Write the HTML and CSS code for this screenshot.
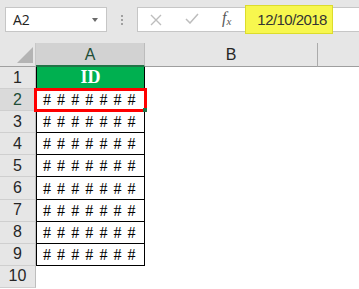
FILE: index.html
```html
<!DOCTYPE html>
<html>
<head>
<meta charset="utf-8">
<link rel="stylesheet" href="styles.css">
</head>
<body>
<div class="app">
  <div class="fbar">
    <div class="namebox"><span class="ref">A2</span><span class="caret"></span></div>
    <div class="grip"><i></i><i></i><i></i></div>
    <div class="formula">
      <svg class="ico ico-x" width="12" height="12" viewBox="0 0 12 12"><path d="M1 1 L11 11 M11 1 L1 11" stroke="#bdbdbd" stroke-width="1.4" fill="none"/></svg>
      <svg class="ico ico-check" width="14" height="11" viewBox="0 0 14 11"><path d="M1 6 L5 10 L13 1" stroke="#bdbdbd" stroke-width="1.5" fill="none"/></svg>
      <span class="fx">f<span class="fx-sub">x</span></span>
      <div class="input"><span class="value">12/10/2018</span></div>
    </div>
  </div>
  <div class="sheet">
    <div class="corner"><span class="tri"></span></div>
    <div class="colhead sel">A</div>
    <div class="colhead">B</div>
    <div class="colhead last"></div>

    <div class="rowhead">1</div><div class="cell a head">ID</div><div class="cell"></div><div class="cell"></div>
    <div class="rowhead sel">2</div><div class="cell a hash active">#######<span class="selbox"></span><span class="handle"></span></div><div class="cell"></div><div class="cell"></div>
    <div class="rowhead">3</div><div class="cell a hash">#######</div><div class="cell"></div><div class="cell"></div>
    <div class="rowhead">4</div><div class="cell a hash">#######</div><div class="cell"></div><div class="cell"></div>
    <div class="rowhead">5</div><div class="cell a hash">#######</div><div class="cell"></div><div class="cell"></div>
    <div class="rowhead">6</div><div class="cell a hash">#######</div><div class="cell"></div><div class="cell"></div>
    <div class="rowhead">7</div><div class="cell a hash">#######</div><div class="cell"></div><div class="cell"></div>
    <div class="rowhead">8</div><div class="cell a hash">#######</div><div class="cell"></div><div class="cell"></div>
    <div class="rowhead">9</div><div class="cell a hash">#######</div><div class="cell"></div><div class="cell"></div>
    <div class="rowhead">10</div><div class="cell"></div><div class="cell"></div><div class="cell"></div>
  </div>
</div>
</body>
</html>
```
FILE: styles.css
```css
html, body {
  margin: 0;
  padding: 0;
  background: #ffffff;
  overflow: hidden;
}
.app {
  width: 359px;
  height: 289px;
  font-family: "Liberation Sans", Arial, sans-serif;
}
.fbar {
  box-sizing: border-box;
  height: 43px;
  background: #e6e6e6;
  display: flex;
  align-items: flex-start;
  padding-top: 7px;
}
.namebox {
  box-sizing: border-box;
  margin-left: 5px;
  width: 102px;
  height: 25px;
  background: #fff;
  border: 1px solid #c6c6c6;
  display: flex;
  align-items: center;
  justify-content: space-between;
  padding: 0 8px 0 7px;
}
.ref {
  font-family: "Open Sans", sans-serif;
  font-size: 14px;
  color: #222;
}
.caret {
  width: 0;
  height: 0;
  border-left: 3.5px solid transparent;
  border-right: 3.5px solid transparent;
  border-top: 4px solid #6a6a6a;
}
.grip {
  width: 30px;
  height: 25px;
  display: flex;
  flex-direction: column;
  align-items: center;
  padding-top: 8px;
  box-sizing: border-box;
  gap: 2px;
}
.grip i {
  display: block;
  width: 2px;
  height: 2px;
  background: #a0a0a0;
}
.formula {
  box-sizing: border-box;
  flex: 1;
  height: 25px;
  background: #fff;
  border: 1px solid #c6c6c6;
  border-right: none;
  display: flex;
  align-items: center;
  padding-left: 12px;
}
.ico-x { margin-right: 23px; }
.ico-check { margin-right: 23px; margin-top: -2px; }
.fx {
  font-family: "Liberation Serif", serif;
  font-style: italic;
  font-size: 16px;
  color: #5a5a5a;
  margin-top: -3px;
}
.fx-sub {
  font-size: 11px;
  position: relative;
  top: 2px;
}
.input {
  margin-left: 14px;
  flex: 1;
  display: flex;
  align-items: center;
  height: 23px;
}
.value {
  box-sizing: border-box;
  width: 88px;
  height: 29px;
  background: #f7f74e;
  border: 1px solid #dcdc2c;
  font-size: 15px;
  letter-spacing: -0.55px;
  color: #333;
  display: flex;
  align-items: center;
  padding-left: 11px;
}
.sheet {
  display: grid;
  grid-template-columns: 36px 109px 173px 1fr;
  grid-template-rows: 24px repeat(10, 22.1px);
}
.corner {
  box-sizing: border-box;
  background: #e6e6e6;
  border-right: 1px solid #c8c8c8;
  border-bottom: 1px solid #a0a0a0;
  display: flex;
  justify-content: flex-end;
  align-items: flex-end;
  padding: 0 2px 3px 0;
}
.tri {
  width: 16px;
  height: 16px;
  background: #b4b4b4;
  clip-path: polygon(100% 0, 100% 100%, 0 100%);
}
.colhead {
  box-sizing: border-box;
  background: #e6e6e6;
  border-right: 1px solid #ababab;
  border-bottom: 1px solid #9e9e9e;
  display: flex;
  align-items: center;
  justify-content: center;
  font-size: 16px;
  color: #262626;
  padding-top: 1px;
}
.colhead.sel {
  background: #d2d2d2;
  border-bottom: 2px solid #217346;
  border-right: 1px solid #bcbcbc;
  color: #1e4d36;
}
.colhead.last { border-right: none; }
.rowhead {
  box-sizing: border-box;
  background: #e6e6e6;
  border-right: 1px solid #bdbdbd;
  border-bottom: 1px solid #cfcfcf;
  display: flex;
  align-items: center;
  justify-content: center;
  font-size: 16px;
  color: #262626;
}
.rowhead.sel {
  background: #dadada;
  color: #1e4d36;
}
.cell {
  box-sizing: border-box;
  background: #fff;
}
.cell.a {
  border-left: 1px solid #000;
  border-right: 1px solid #000;
  border-bottom: 1px solid #000;
  display: flex;
  align-items: center;
  font-family: "Liberation Serif", "Times New Roman", serif;
}
.cell.head {
  background: #00b050;
  color: #fff;
  font-weight: bold;
  font-size: 18px;
  justify-content: center;
}
.cell.hash {
  font-size: 16px;
  color: #000;
  letter-spacing: 6.1px;
  padding-left: 6px;
  padding-top: 1px;
  white-space: nowrap;
  overflow: visible;
}
.cell.active { position: relative; }
.selbox {
  position: absolute;
  left: -3px;
  right: -3px;
  top: -1px;
  bottom: -2px;
  border: 3px solid #ff0000;
}
.handle {
  position: absolute;
  right: -3px;
  bottom: -2px;
  width: 4px;
  height: 4px;
  background: #217346;
}
```
